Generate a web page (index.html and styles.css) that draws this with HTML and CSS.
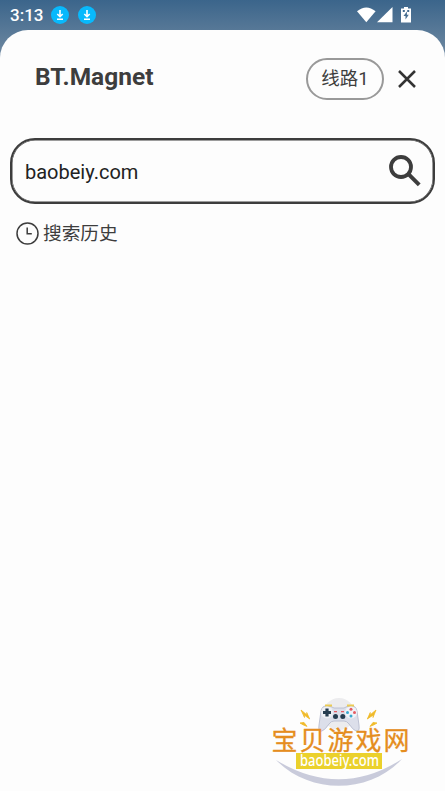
FILE: index.html
```html
<!DOCTYPE html>
<html lang="zh-CN">
<head>
<meta charset="utf-8">
<title>BT.Magnet</title>
<link rel="stylesheet" href="styles.css">
</head>
<body>
<header class="status">
  <span class="time">3:13</span>
  <svg class="dl" viewBox="0 0 18 18"><circle cx="9" cy="9" r="9"/><path d="M9 4v6.2M6.3 8 9 10.7 11.7 8M6 13.2h6"/></svg>
  <svg class="dl" viewBox="0 0 18 18"><circle cx="9" cy="9" r="9"/><path d="M9 4v6.2M6.3 8 9 10.7 11.7 8M6 13.2h6"/></svg>
  <div class="system">
    <svg width="19" height="16" viewBox="0 0 19 16"><path d="M0 4.200Q9.300-3.400 18.600 4.200L9.300 15.300z"/></svg>
    <svg width="16" height="16" viewBox="0 0 16 16"><path d="M15.500 0v15.300H0z"/></svg>
    <svg width="10" height="16" viewBox="0 0 10 16"><path fill-rule="evenodd" d="M3 0h4v1.500h3V15.500H0V1.500h3zM1.800 3v2h2V3zM6.200 3v2h2V3zM5.900 4.500 2.500 9h2V12.500L7.800 7.800H5.900z"/></svg>
  </div>
</header>
<main class="sheet">
  <div class="top">
    <h1>BT.Magnet</h1>
    <button class="line">线路1</button>
    <svg class="close" viewBox="0 0 18 18"><path d="m1 1 16 16M17 1 1 17"/></svg>
  </div>
  <div class="search">
    <span>baobeiy.com</span>
    <svg viewBox="0 0 32 32"><circle cx="12" cy="12" r="10"/><path d="m19.500 19.200 10.700 10.700"/></svg>
  </div>
  <div class="history">
    <svg viewBox="0 0 23 23"><circle cx="11.500" cy="11.500" r="10.500"/><path d="M11.200 5.500v6.200h4.600"/></svg>
    <span>搜索历史</span>
  </div>
</main>
<svg class="brand" viewBox="0 0 155 101">
  <circle cx="74" cy="24" r="16" fill="#ececee"/>
  <path d="M11 70Q75 109 137 69C105 104 45 105 11 70z" fill="#c9cbdb"/>
  <path d="M61 16Q67 16 69 18H79Q81 16 87 16 91 16 92 21L94 35Q95 42 91 41 88 40 84 34 82 31 79 31H69Q66 31 64 34 60 40 57 41 53 42 54 35L56 21Q57 16 61 16z" fill="#dcdfea" stroke="#b3b7cb" stroke-width=".8"/>
  <path d="M60 15.500h7M82 15.500h7" stroke="#eccb52" stroke-width="1.800"/>
  <circle cx="62" cy="22.500" r="6" fill="#eef0f5"/>
  <path d="M62 18.500v8M58 22.500h8" stroke="#263d50" stroke-width="3.200"/>
  <g fill="#263d50"><circle cx="70.500" cy="26.500" r="2.500"/><circle cx="77.800" cy="26.500" r="2.500"/></g>
  <circle cx="86" cy="22.500" r="6" fill="#f1f3f8"/>
  <g fill="#e45c63"><circle cx="86" cy="19.300" r="1.500"/><circle cx="89.500" cy="22.600" r="1.500"/><path d="M69 21h3v1.300h-3zm7 0h3v1.300h-3z"/></g>
  <g fill="#39a9cf"><circle cx="82.500" cy="22.600" r="1.500"/><circle cx="86" cy="26" r="1.500"/></g>
  <path d="m36 20 6 5-.3-2.500 3 6.500-5.500-4 .3 2.500zM111 20l-6 5 .3-2.500-3 6.500 6-4-.3 2.500zM35 33l4-.6 3 4-4-1.600zM112 33l-4-.6-3 4 4-1.600z" fill="#f0ba28" stroke="#f0ba28" stroke-width=".8"/>
  <text class="brand-name" x="6.500" y="59.500" textLength="138" lengthAdjust="spacing">宝贝游戏网</text>
  <path d="M31 63h86v16H31z" fill="#ebd12c"/>
  <text class="brand-url" x="35" y="75.500" textLength="79" lengthAdjust="spacingAndGlyphs">baobeiy.com</text>
</svg>
</body>
</html>
```
FILE: styles.css
```css
* { box-sizing: border-box; }
body {
  margin: 0;
  height: 791px;
  overflow: hidden;
  position: relative;
  background: linear-gradient(#3b658b, #718aa2 58px);
  color: #3d3d3d;
  font-family: Roboto, "Noto Sans CJK SC", sans-serif;
}
svg { display: block; flex: none; }
.status {
  height: 30px;
  display: flex;
  align-items: center;
  padding: 0 34px 0 10px;
  color: #fff;
}
.time { width: 41px; font-size: 17px; font-weight: 500; line-height: 30px; }
.dl { width: 18px; height: 18px; margin-right: 9px; }
.dl circle { fill: #08b9fc; }
.dl path { fill: none; stroke: #fff; stroke-width: 1.6; }
.system { display: flex; align-items: center; margin-left: auto; fill: #fff; }
.system svg:nth-child(2) { margin-left: 1px; }
.system svg:nth-child(3) { margin-left: 8px; }
.sheet {
  height: 761px;
  padding: 28px 10px 0;
  border-radius: 28px 28px 0 0;
  background: #fdfdfd;
}
.top { height: 42px; display: flex; align-items: center; padding: 0 19px 0 25px; }
h1 { margin: 0 auto 4px 0; font-size: 24.5px; line-height: 32px; font-weight: 700; }
.line {
  width: 78px;
  height: 42px;
  padding: 1px 0 0;
  border: 2px solid #999;
  border-radius: 21px;
  background: transparent;
  color: #3d3d3d;
  font: 18.5px/37px Roboto, "Noto Sans CJK SC", sans-serif;
}
.close { width: 18px; height: 18px; margin-left: 14px; }
.close path { fill: none; stroke: #333; stroke-width: 2.5; }
.search {
  height: 66px;
  margin-top: 38px;
  padding: 0 12px 0 13px;
  display: flex;
  align-items: center;
  justify-content: space-between;
  border: 2px solid #3d3d3d;
  box-shadow: inset 0 0 0 0.5px #3d3d3d;
  border-radius: 25px;
  color: #222;
  font-size: 20px;
}
.search span { padding-top: 1px; }
.search svg { width: 32px; height: 32px; }
.search circle, .search path { fill: none; stroke: #3d3d3d; stroke-width: 3.8; }
.search path { stroke-width: 4; }
.history { display: flex; align-items: center; height: 28px; margin: 15px 0 0 6px; font-size: 18.7px; }
.history svg { width: 23px; height: 23px; margin-right: 4px; fill: none; stroke: #3d3d3d; stroke-width: 1.5; }
.history span { line-height: 28px; padding-top: 2px; }
.brand { position: absolute; left: 265px; top: 690px; width: 155px; height: 101px; }
.brand-name { font: 400 26px "Noto Sans CJK SC", sans-serif; fill: #e58d20; stroke: #e58d20; stroke-width: 0.3; }
.brand-url { font: 500 15.5px "Noto Sans", sans-serif; fill: #fff; }
```
